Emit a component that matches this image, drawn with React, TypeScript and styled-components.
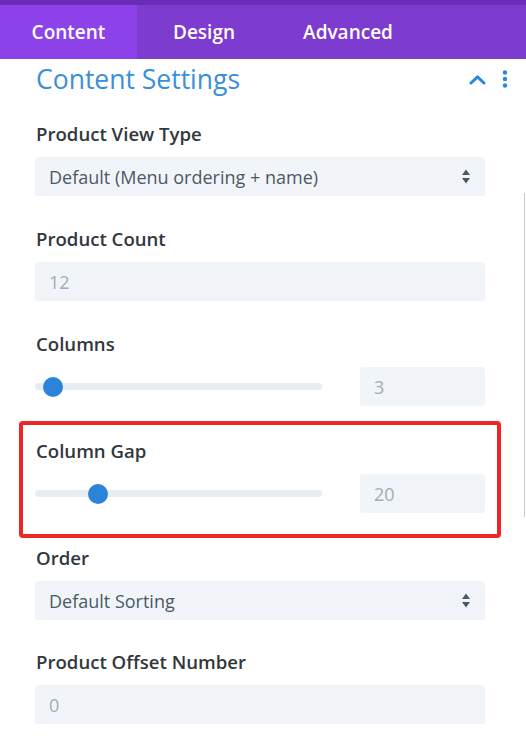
import React from "react";
import styled, { createGlobalStyle } from "styled-components";

const Global = createGlobalStyle`
  html, body { margin: 0; padding: 0; background: #ffffff; }
  body { font-family: "Open Sans", "Noto Sans", sans-serif; }
  * { box-sizing: border-box; }
`;

const Panel = styled.div`
  position: relative;
  width: 526px;
  min-height: 738px;
  background: #ffffff;
  overflow: hidden;
`;

const TopBand = styled.div`
  height: 5px;
  background: #6b2db8;
`;

const TabBar = styled.div`
  display: flex;
  height: 54px;
  background: #7e3bcf;
`;

const Tab = styled.div<{ $active?: boolean; $w: number }>`
  display: flex;
  align-items: center;
  justify-content: center;
  width: ${(p) => p.$w}px;
  background: ${(p) => (p.$active ? "#8e43ea" : "transparent")};
  color: #ffffff;
  font-size: 19px;
  font-weight: 600;
`;

const Header = styled.div`
  display: flex;
  align-items: center;
  height: 44px;
  padding: 0 18px 4px 36px;
`;

const Title = styled.h2`
  flex: 1;
  margin: 0;
  font-size: 26.5px;
  font-weight: 400;
  color: #3a8fd9;
`;

const HeaderIcons = styled.div`
  display: flex;
  align-items: center;
  gap: 16px;
`;

const Body = styled.div`
  display: flex;
  flex-direction: column;
  padding: 19px 41px 0 35px;
`;

const Group = styled.div<{ $mb?: number }>`
  display: flex;
  flex-direction: column;
  margin-bottom: ${(p) => (p.$mb ?? 31)}px;
`;

const Highlight = styled.div`
  margin: 0 -16px 8px -16px;
  border: 4px solid #ee2626;
  border-radius: 4px;
  padding: 14px 12px 21px 12px;
`;

const Label = styled.div`
  font-size: 18.6px;
  line-height: 24px;
  font-weight: 600;
  color: #32373c;
  margin-bottom: 11px;
  padding-left: 1px;
`;

const Field = styled.div<{ $muted?: boolean; $width?: number }>`
  display: flex;
  align-items: center;
  height: 39px;
  width: ${(p) => (p.$width ? `${p.$width}px` : "100%")};
  background: #f1f5f9;
  border-radius: 3px;
  padding: 0 14px;
  font-size: 18px;
  font-weight: 500;
  color: ${(p) => (p.$muted ? "#a3acb8" : "#4c5866")};
`;

const SelectText = styled.span`
  flex: 1;
`;

const SliderRow = styled.div`
  display: flex;
  align-items: center;
  justify-content: space-between;
`;

const Track = styled.div`
  position: relative;
  width: 287px;
  height: 7px;
  border-radius: 4px;
  background: #e7edf3;
`;

const Thumb = styled.div`
  position: absolute;
  top: 50%;
  width: 20px;
  height: 20px;
  margin-top: -10px;
  border-radius: 50%;
  background: #2b84d8;
`;

const Scrollbar = styled.div`
  position: absolute;
  right: 1px;
  top: 193px;
  width: 1px;
  height: 324px;
  background: #c9c9c9;
`;

const SortArrows = () => (
  <svg width="10" height="15" viewBox="0 0 10 15">
    <path d="M5 0.5 L9 6 L1 6 Z" fill="#4c5866" />
    <path d="M5 14.5 L9 9 L1 9 Z" fill="#4c5866" />
  </svg>
);

const ChevronUp = () => (
  <svg width="17" height="11" viewBox="0 0 17 11">
    <path d="M2 9 L8.5 2.8 L15 9" fill="none" stroke="#2b87da" strokeWidth="3" strokeLinecap="round" strokeLinejoin="round" />
  </svg>
);

const Dots = () => (
  <svg width="6" height="18" viewBox="0 0 6 18">
    <circle cx="3" cy="2.5" r="2.2" fill="#2b87da" />
    <circle cx="3" cy="9" r="2.2" fill="#2b87da" />
    <circle cx="3" cy="15.5" r="2.2" fill="#2b87da" />
  </svg>
);

const Slider = ({ pos, value }: { pos: number; value: string }) => (
  <SliderRow>
    <Track>
      <Thumb style={{ left: `${pos}px` }} />
    </Track>
    <Field $muted $width={125}>{value}</Field>
  </SliderRow>
);

export default function App() {
  return (
    <>
      <Global />
      <Panel>
        <TopBand />
        <TabBar>
          <Tab $active $w={137}>Content</Tab>
          <Tab $w={134}>Design</Tab>
          <Tab $w={154}>Advanced</Tab>
        </TabBar>
        <Header>
          <Title>Content Settings</Title>
          <HeaderIcons>
            <ChevronUp />
            <Dots />
          </HeaderIcons>
        </Header>
        <Body>
          <Group>
            <Label>Product View Type</Label>
            <Field>
              <SelectText>Default (Menu ordering + name)</SelectText>
              <SortArrows />
            </Field>
          </Group>
          <Group>
            <Label>Product Count</Label>
            <Field $muted>12</Field>
          </Group>
          <Group $mb={15}>
            <Label>Columns</Label>
            <Slider pos={8} value="3" />
          </Group>
          <Highlight>
            <Label>Column Gap</Label>
            <Slider pos={53} value="20" />
          </Highlight>
          <Group $mb={30}>
            <Label>Order</Label>
            <Field>
              <SelectText>Default Sorting</SelectText>
              <SortArrows />
            </Field>
          </Group>
          <Group>
            <Label>Product Offset Number</Label>
            <Field $muted>0</Field>
          </Group>
        </Body>
        <Scrollbar />
      </Panel>
    </>
  );
}
